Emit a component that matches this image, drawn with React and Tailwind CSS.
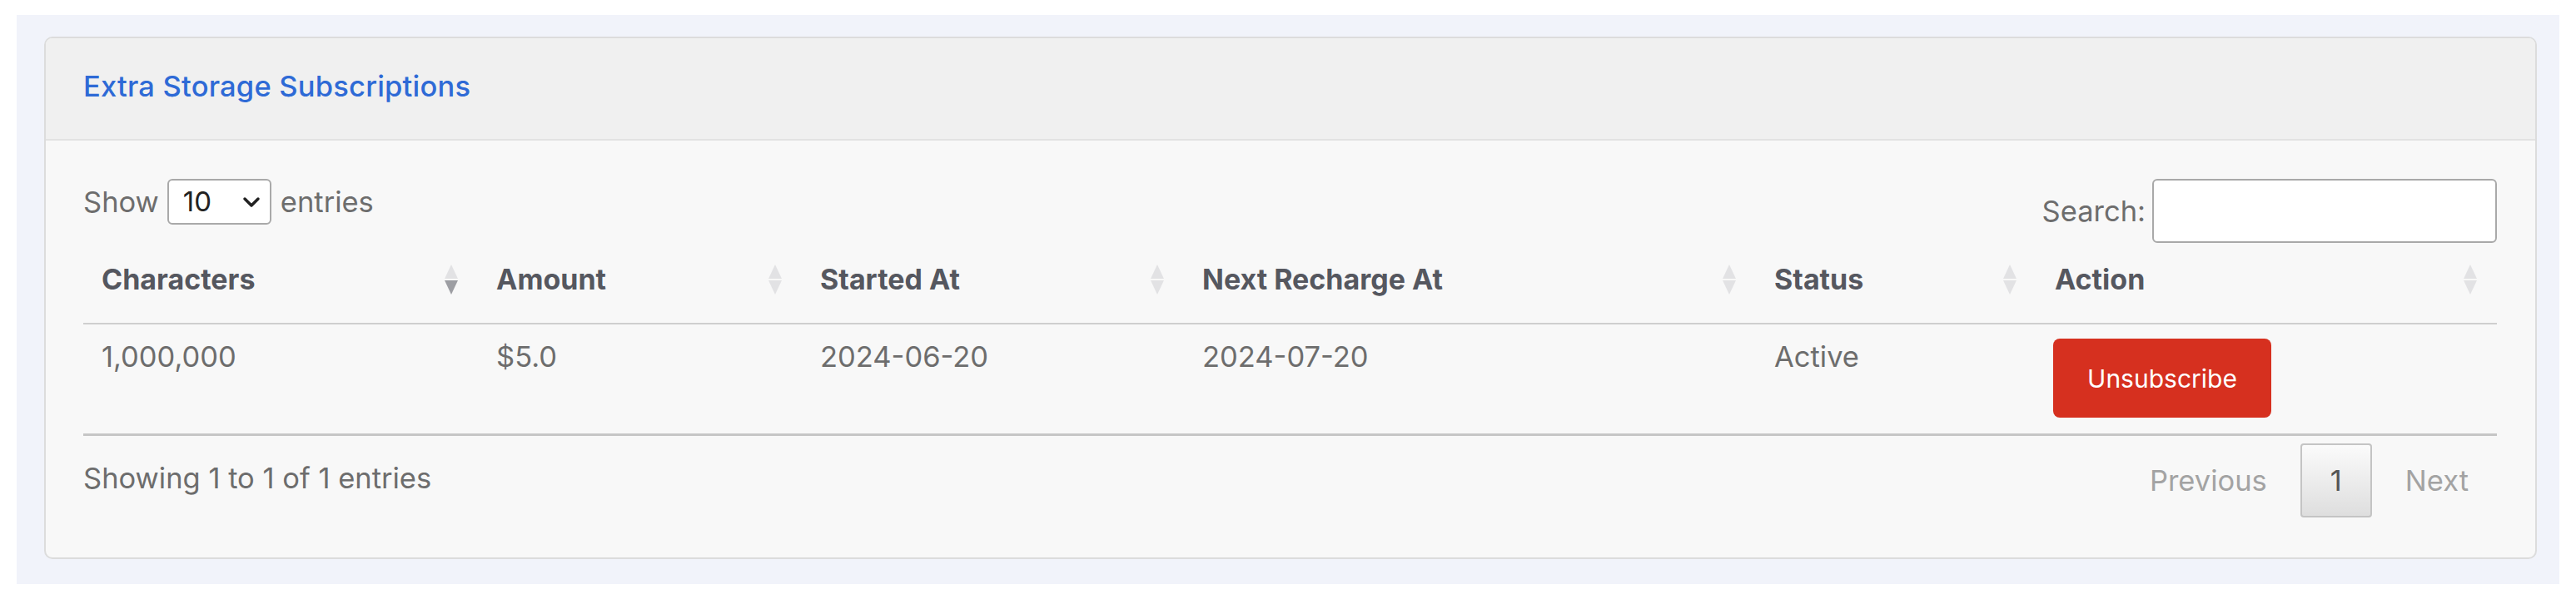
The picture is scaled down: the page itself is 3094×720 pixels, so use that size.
import React from "react";

const columnas = [
  { titulo: "Characters", orden: "asc" },
  { titulo: "Amount" },
  { titulo: "Started At" },
  { titulo: "Next Recharge At" },
  { titulo: "Status" },
  { titulo: "Action" },
];

const filas = [
  {
    caracteres: "1,000,000",
    monto: "$5.0",
    inicio: "2024-06-20",
    proximo: "2024-07-20",
    estado: "Active",
  },
];

const grid = "grid grid-cols-[474px_389px_459px_687px_337px_553px]";

const SortIcon = ({ orden }) => (
  <svg width="20" height="38" viewBox="0 0 20 38" className="shrink-0">
    <path d="M10 1 L18 18 L2 18 Z" fill="#e2e2e4" />
    <path
      d="M10 37 L18 20 L2 20 Z"
      fill={orden === "asc" ? "#9d9ea3" : "#e2e2e4"}
    />
  </svg>
);

const App = () => {
  return (
    <div
      className="w-[3094px] h-[720px] bg-white pt-[18px] pl-[20px]"
      style={{ fontFamily: "Inter, 'Noto Sans', sans-serif" }}
    >
      <div className="w-[3054px] h-[684px] bg-[#f1f3fa] pt-[26px] pl-[33px]">
        <div className="w-[2994px] h-[628px] rounded-[10px] border-2 border-[#dcdcdc] bg-[#f8f8f8] overflow-hidden">
          {/* cabecera */}
          <div className="h-[123px] bg-[#f0f0f0] border-b-2 border-[#e2e2e2] flex items-center pl-[45px] pb-[6px]">
            <h2 className="text-[34.5px] font-medium text-[#2e6ad6] tracking-[0.2px]">
              Extra Storage Subscriptions
            </h2>
          </div>

          <div className="pl-[45px] pr-[46px] pt-[46px]">
            {/* controles */}
            <div className="flex justify-between items-start h-[77px]">
              <div className="flex items-center h-[55px] text-[34.5px] text-[#6d6d6d]">
                <span>Show</span>
                <div className="ml-[10px] mr-[11px] w-[125px] h-[55px] bg-white border-2 border-[#a9a9a9] rounded-[6px] flex items-center justify-between pl-[17px] pr-[10px] text-[#222]">
                  <span className="text-[33px]">10</span>
                  <svg width="24" height="16" viewBox="0 0 24 16">
                    <path
                      d="M4 4 L12 12 L20 4"
                      fill="none"
                      stroke="#222"
                      strokeWidth="3.5"
                      strokeLinecap="round"
                      strokeLinejoin="round"
                    />
                  </svg>
                </div>
                <span>entries</span>
              </div>
              <div className="flex items-center text-[34.5px] text-[#6d6d6d]">
                <span>Search:</span>
                <div className="ml-[8px] w-[414px] h-[77px] bg-white border-2 border-[#a9a9a9] rounded-[6px]" />
              </div>
            </div>

            {/* tabla */}
            <div className="mt-[7px]">
              <div className={`${grid} border-b-2 border-[#cfcfcf]`}>
                {columnas.map((col, i) => (
                  <div
                    key={i}
                    className="flex items-center justify-between pl-[22px] pr-[22px] pt-[15px] pb-[30px]"
                  >
                    <span className="text-[34px] leading-[44px] font-bold text-[#55575f]">
                      {col.titulo}
                    </span>
                    <SortIcon orden={col.orden} />
                  </div>
                ))}
              </div>

              {filas.map((fila, i) => (
                <div
                  key={i}
                  className={`${grid} border-b-[3px] border-[#c6c6c6] text-[34.5px] leading-[44px] text-[#6d6d6d]`}
                >
                  <div className="pl-[22px] pt-[17px] pb-[19px]">{fila.caracteres}</div>
                  <div className="pl-[22px] pt-[17px]">{fila.monto}</div>
                  <div className="pl-[22px] pt-[17px]">{fila.inicio}</div>
                  <div className="pl-[22px] pt-[17px]">{fila.proximo}</div>
                  <div className="pl-[22px] pt-[17px]">{fila.estado}</div>
                  <div className="pl-[20px] pt-[17px] pb-[19px]">
                    <button className="w-[262px] h-[95px] rounded-[8px] bg-[#d6301f] text-white text-[30px] leading-none">
                      Unsubscribe
                    </button>
                  </div>
                </div>
              ))}

              {/* pie */}
              <div className="flex justify-between items-start pt-[9px]">
                <div className="h-[84px] flex items-center text-[34.5px] text-[#6d6d6d]">
                  Showing 1 to 1 of 1 entries
                </div>
                <div className="flex items-center text-[34.5px]">
                  <span className="h-[89px] flex items-center px-[34px] text-[#a3a3a3]">
                    Previous
                  </span>
                  <span className="ml-[6px] h-[89px] flex items-center px-[34px] border-2 border-[#c4c4c4] rounded-[4px] bg-gradient-to-b from-[#fbfbfb] to-[#dedede] text-[#555]">
                    1
                  </span>
                  <span className="ml-[6px] h-[89px] flex items-center px-[34px] text-[#a3a3a3]">
                    Next
                  </span>
                </div>
              </div>
            </div>
          </div>
        </div>
      </div>
    </div>
  );
};

export default App;
